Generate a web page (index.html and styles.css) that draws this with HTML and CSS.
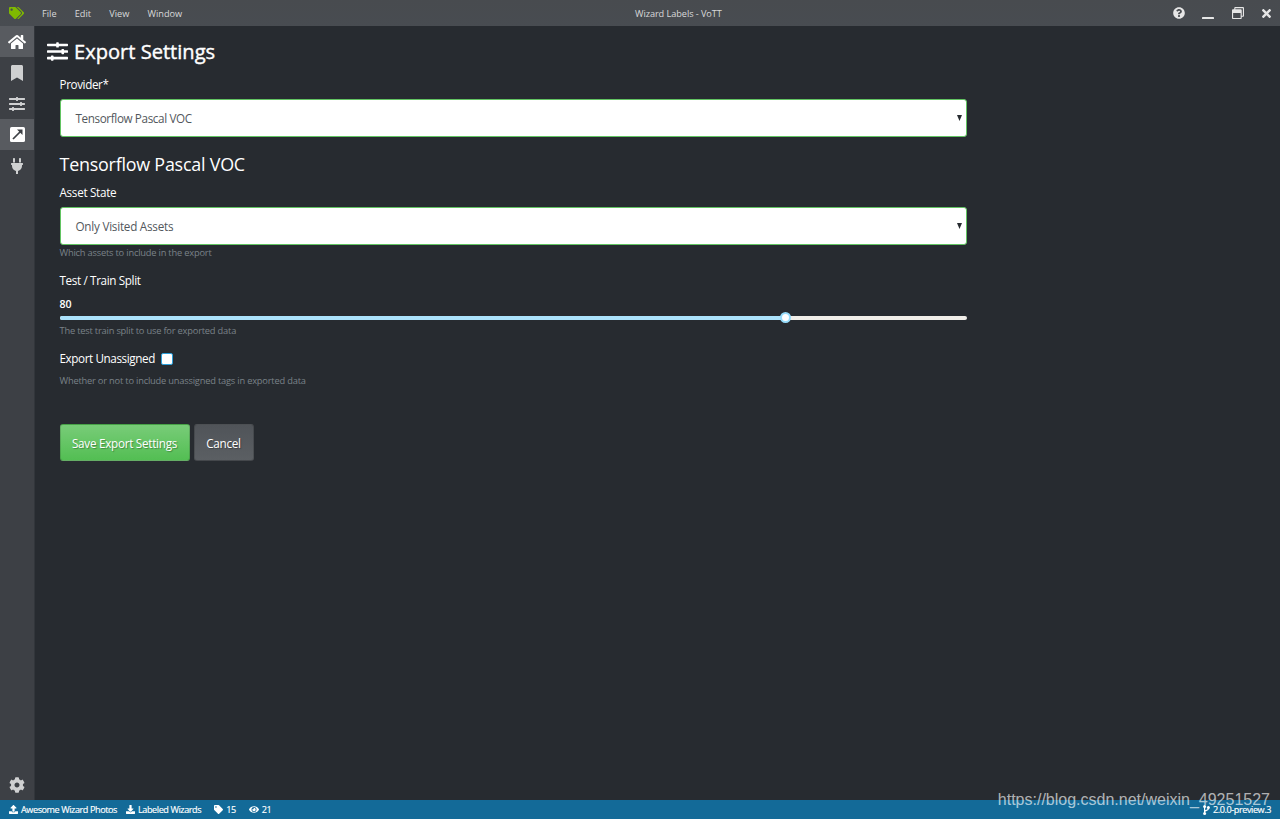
FILE: index.html
```
<!DOCTYPE html>
<html lang="en">

<head>
    <meta charset="UTF-8">
    <meta name="viewport" content="width=device-width, initial-scale=1.0">
    <title>Wizard Labels - VoTT</title>
    <link rel="stylesheet" href="styles.css">
</head>

<body>
    <!-- Title bar -->
    <header class="title-bar">
        <div class="title-left">
            <svg class="logo" viewBox="0 0 640 512"><path d="M497.941 225.941L286.059 14.059A48 48 0 0 0 252.118 0H48C21.49 0 0 21.49 0 48v204.118a48 48 0 0 0 14.059 33.941l211.882 211.882c18.744 18.745 49.136 18.746 67.882 0l204.118-204.118c18.745-18.745 18.745-49.137 0-67.882zM112 160c-26.51 0-48-21.49-48-48s21.49-48 48-48 48 21.49 48 48-21.49 48-48 48zm513.941 133.823L421.823 497.941c-18.745 18.745-49.137 18.745-67.882 0l-.36-.36L527.64 323.522c16.999-16.999 26.362-39.6 26.362-63.64s-9.362-46.641-26.362-63.64L331.397 0h48.721a48 48 0 0 1 33.941 14.059l211.882 211.882c18.745 18.745 18.745 49.137 0 67.882z"/></svg>
            <nav class="menu">
                <span>File</span>
                <span>Edit</span>
                <span>View</span>
                <span>Window</span>
            </nav>
        </div>
        <div class="window-title">Wizard Labels - VoTT</div>
        <div class="window-buttons">
            <svg class="help-icon" viewBox="0 0 512 512"><path d="M504 256c0 136.997-111.043 248-248 248S8 392.997 8 256C8 119.083 119.043 8 256 8s248 111.083 248 248zM262.655 90c-54.497 0-89.255 22.957-116.549 63.758-3.536 5.286-2.353 12.415 2.715 16.258l34.699 26.31c5.205 3.947 12.621 3.008 16.665-2.122 17.864-22.658 30.113-35.797 57.303-35.797 20.429 0 45.698 13.148 45.698 32.958 0 14.976-12.363 22.667-32.534 33.976C247.128 238.528 216 254.941 216 296v4c0 6.627 5.373 12 12 12h56c6.627 0 12-5.373 12-12v-1.333c0-28.462 83.186-29.647 83.186-106.667 0-58.002-60.165-102-116.531-102zM256 338c-25.365 0-46 20.635-46 46 0 25.364 20.635 46 46 46s46-20.636 46-46c0-25.365-20.635-46-46-46z"/></svg>
            <svg class="minimize-icon" viewBox="0 0 12 12"><rect x="0" y="10" width="12" height="2" rx=".6"/></svg>
            <svg class="restore-icon" viewBox="0 0 512 512"><path d="M464 0H144c-26.500 0-48 21.500-48 48v48H48c-26.500 0-48 21.500-48 48v320c0 26.500 21.500 48 48 48h320c26.500 0 48-21.500 48-48v-48h48c26.500 0 48-21.500 48-48V48c0-26.500-21.500-48-48-48zm-96 464H48V256h320v208zm96-96h-48V144c0-26.500-21.500-48-48-48H144V48h320v320z"/></svg>
            <svg class="close-icon" viewBox="0 0 352 512"><path d="M242.720 256l100.070-100.070c12.280-12.280 12.280-32.190 0-44.480l-22.240-22.240c-12.280-12.280-32.190-12.280-44.480 0L176 189.280 75.930 89.210c-12.280-12.280-32.190-12.280-44.480 0L9.210 111.450c-12.280 12.280-12.280 32.190 0 44.480L109.280 256 9.210 356.070c-12.280 12.280-12.280 32.190 0 44.480l22.240 22.240c12.280 12.280 32.200 12.280 44.480 0L176 322.720l100.070 100.070c12.280 12.280 32.200 12.280 44.480 0l22.240-22.240c12.280-12.280 12.280-32.190 0-44.480L242.720 256z"/></svg>
        </div>
    </header>

    <div class="main">
        <!-- Sidebar -->
        <aside class="sidebar">
            <div class="side-item active">
                <svg class="home-icon" viewBox="0 0 576 512"><path d="M280.370 148.260L96 300.110V464a16 16 0 0 0 16 16l112.060-.29a16 16 0 0 0 15.920-16V368a16 16 0 0 1 16-16h64a16 16 0 0 1 16 16v95.640a16 16 0 0 0 16 16.050L464 480a16 16 0 0 0 16-16V300L295.670 148.260a12.190 12.190 0 0 0-15.300 0zM571.600 251.470L488 182.560V44.050a12 12 0 0 0-12-12h-56a12 12 0 0 0-12 12v72.610L318.470 43a48 48 0 0 0-61 0L4.340 251.470a12 12 0 0 0-1.600 16.900l25.500 31A12 12 0 0 0 45.150 301l235.220-193.740a12.190 12.190 0 0 1 15.300 0L530.900 301a12 12 0 0 0 16.900-1.600l25.500-31a12 12 0 0 0-1.700-16.930z"/></svg>
            </div>
            <div class="side-item">
                <svg class="bookmark-icon" viewBox="0 0 384 512"><path d="M0 512V48C0 21.490 21.490 0 48 0h288c26.510 0 48 21.490 48 48v464L192 400 0 512z"/></svg>
            </div>
            <div class="side-item">
                <svg class="side-icon" viewBox="0 0 512 512"><path d="M496 384H160v-16c0-8.800-7.200-16-16-16h-32c-8.800 0-16 7.200-16 16v16H16c-8.800 0-16 7.200-16 16v32c0 8.800 7.200 16 16 16h80v16c0 8.800 7.200 16 16 16h32c8.800 0 16-7.200 16-16v-16h336c8.800 0 16-7.200 16-16v-32c0-8.800-7.200-16-16-16zm0-160h-80v-16c0-8.800-7.200-16-16-16h-32c-8.800 0-16 7.200-16 16v16H16c-8.800 0-16 7.200-16 16v32c0 8.800 7.200 16 16 16h336v16c0 8.800 7.200 16 16 16h32c8.800 0 16-7.200 16-16v-16h80c8.800 0 16-7.200 16-16v-32c0-8.800-7.200-16-16-16zm0-160H288V48c0-8.800-7.200-16-16-16h-32c-8.800 0-16 7.200-16 16v16H16C7.200 64 0 71.200 0 80v32c0 8.800 7.200 16 16 16h208v16c0 8.800 7.200 16 16 16h32c8.800 0 16-7.200 16-16v-16h208c8.800 0 16-7.200 16-16V80c0-8.800-7.200-16-16-16z"/></svg>
            </div>
            <div class="side-item active">
                <svg class="export-icon" viewBox="0 0 15 15">
                    <rect width="15" height="15" rx="1.6"/>
                    <path class="arrow-head" d="M7 2.500h5.500V8z"/>
                    <path class="arrow-line" d="M3 12l7.500-7.500"/>
                </svg>
            </div>
            <div class="side-item">
                <svg class="plug-icon" viewBox="0 0 384 512"><path d="M256 144V32c0-17.673 14.327-32 32-32s32 14.327 32 32v112h-64zm112 16H16c-8.837 0-16 7.163-16 16v32c0 8.837 7.163 16 16 16h16v32c0 77.406 54.969 141.971 128 156.796V512h64v-99.204c73.031-14.825 128-79.390 128-156.796v-32h16c8.837 0 16-7.163 16-16v-32c0-8.837-7.163-16-16-16zm-240-16V32c0-17.673-14.327-32-32-32S64 14.327 64 32v112h64z"/></svg>
            </div>
            <div class="side-item settings">
                <svg class="side-icon" viewBox="0 0 512 512"><path d="M487.400 315.700l-42.600-24.600c4.300-23.200 4.300-47 0-70.200l42.600-24.600c4.900-2.800 7.100-8.600 5.500-14-11.100-35.600-30-67.800-54.700-94.600-3.800-4.100-10-5.100-14.800-2.300L380.800 110c-17.900-15.400-38.500-27.300-60.800-35.100V25.800c0-5.600-3.900-10.500-9.400-11.700-36.700-8.200-74.300-7.800-109.200 0-5.500 1.200-9.400 6.100-9.400 11.700V75c-22.200 7.900-42.800 19.800-60.800 35.100L88.700 85.500c-4.900-2.800-11-1.900-14.800 2.300-24.700 26.700-43.600 58.900-54.700 94.600-1.700 5.400.6 11.200 5.500 14L67.300 221c-4.300 23.200-4.300 47 0 70.200l-42.600 24.600c-4.900 2.800-7.100 8.600-5.500 14 11.100 35.600 30 67.800 54.700 94.600 3.800 4.100 10 5.100 14.800 2.300l42.600-24.600c17.900 15.400 38.500 27.300 60.800 35.100v49.200c0 5.600 3.900 10.500 9.400 11.700 36.700 8.200 74.300 7.800 109.200 0 5.500-1.200 9.400-6.100 9.400-11.700v-49.200c22.200-7.900 42.800-19.800 60.800-35.100l42.600 24.600c4.900 2.800 11 1.900 14.800-2.300 24.700-26.700 43.600-58.900 54.700-94.600 1.500-5.500-.7-11.300-5.600-14.100zM256 336c-44.100 0-80-35.900-80-80s35.900-80 80-80 80 35.900 80 80-35.900 80-80 80z"/></svg>
            </div>
        </aside>

        <!-- Export settings page -->
        <main class="content">
            <h2 class="page-title">
                <svg viewBox="0 0 512 512"><path d="M496 384H160v-16c0-8.800-7.200-16-16-16h-32c-8.800 0-16 7.200-16 16v16H16c-8.800 0-16 7.200-16 16v32c0 8.800 7.200 16 16 16h80v16c0 8.800 7.200 16 16 16h32c8.800 0 16-7.200 16-16v-16h336c8.800 0 16-7.200 16-16v-32c0-8.800-7.200-16-16-16zm0-160h-80v-16c0-8.800-7.200-16-16-16h-32c-8.800 0-16 7.200-16 16v16H16c-8.800 0-16 7.200-16 16v32c0 8.800 7.200 16 16 16h336v16c0 8.800 7.200 16 16 16h32c8.800 0 16-7.200 16-16v-16h80c8.800 0 16-7.200 16-16v-32c0-8.800-7.200-16-16-16zm0-160H288V48c0-8.800-7.200-16-16-16h-32c-8.800 0-16 7.200-16 16v16H16C7.200 64 0 71.200 0 80v32c0 8.800 7.200 16 16 16h208v16c0 8.800 7.200 16 16 16h32c8.800 0 16-7.200 16-16v-16h208c8.800 0 16-7.200 16-16V80c0-8.800-7.200-16-16-16z"/></svg>
                <span>Export Settings</span>
            </h2>
            <form class="settings-form">
                <label class="label provider-label">Provider*</label>
                <div class="select">
                    <span class="provider-value">Tensorflow Pascal VOC</span>
                    <svg class="caret" viewBox="0 0 5 6"><path d="M0 0h5L2.500 6z"/></svg>
                </div>
                <h4 class="section-title">Tensorflow Pascal VOC</h4>
                <label class="label asset-label">Asset State</label>
                <div class="select">
                    <span class="asset-value">Only Visited Assets</span>
                    <svg class="caret" viewBox="0 0 5 6"><path d="M0 0h5L2.500 6z"/></svg>
                </div>
                <small class="hint">Which assets to include in the export</small>
                <label class="label split-label">Test / Train Split</label>
                <div class="split-value">80</div>
                <div class="slider">
                    <div class="slider-track" style="width: 80%"></div>
                    <div class="slider-handle" style="left: 80%"></div>
                </div>
                <small class="hint">The test train split to use for exported data</small>
                <label class="label checkbox-label">Export Unassigned<span class="checkbox"></span></label>
                <small class="hint">Whether or not to include unassigned tags in exported data</small>
                <div class="buttons">
                    <button type="button" class="btn btn-success">Save Export Settings</button>
                    <button type="button" class="btn btn-secondary">Cancel</button>
                </div>
            </form>
        </main>
    </div>

    <!-- Status bar -->
    <footer class="status-bar">
        <div class="status-item">
            <svg viewBox="0 0 512 512"><path d="M296 384h-80c-13.300 0-24-10.700-24-24V192h-87.700c-17.800 0-26.700-21.500-14.100-34.100L242.300 5.700c7.500-7.500 19.800-7.500 27.300 0l152.200 152.200c12.600 12.600 3.700 34.100-14.100 34.100H320v168c0 13.300-10.700 24-24 24zm216-8v112c0 13.300-10.700 24-24 24H24c-13.300 0-24-10.700-24-24V376c0-13.300 10.700-24 24-24h136v8c0 30.900 25.100 56 56 56h80c30.900 0 56-25.100 56-56v-8h136c13.300 0 24 10.700 24 24z"/></svg>
            <span>Awesome Wizard Photos</span>
        </div>
        <div class="status-item target">
            <svg viewBox="0 0 512 512"><path d="M216 0h80c13.300 0 24 10.700 24 24v168h87.700c17.800 0 26.700 21.500 14.100 34.100L269.700 378.300c-7.500 7.500-19.800 7.500-27.300 0L90.100 226.100c-12.600-12.600-3.700-34.100 14.100-34.100H192V24c0-13.300 10.700-24 24-24zm296 376v112c0 13.300-10.700 24-24 24H24c-13.300 0-24-10.700-24-24V376c0-13.300 10.700-24 24-24h146.700l49 49c20.100 20.100 52.500 20.100 72.600 0l49-49H488c13.300 0 24 10.700 24 24z"/></svg>
            <span>Labeled Wizards</span>
        </div>
        <div class="status-item tagged">
            <svg viewBox="0 0 512 512"><path d="M0 252.118V48C0 21.490 21.490 0 48 0h204.118a48 48 0 0 1 33.941 14.059l211.882 211.882c18.745 18.745 18.745 49.137 0 67.882L293.823 497.941c-18.745 18.745-49.137 18.745-67.882 0L14.059 286.059A48 48 0 0 1 0 252.118zM112 64c-26.510 0-48 21.490-48 48s21.490 48 48 48 48-21.490 48-48-21.490-48-48-48z"/></svg>
            <span>15</span>
        </div>
        <div class="status-item visited">
            <svg viewBox="0 0 576 512"><path d="M572.520 241.400C518.290 135.590 410.930 64 288 64S57.680 135.640 3.480 241.410a32.350 32.350 0 0 0 0 29.190C57.710 376.410 165.070 448 288 448s230.320-71.640 284.520-177.410a32.350 32.350 0 0 0 0-29.190zM288 400a144 144 0 1 1 144-144 143.930 143.930 0 0 1-144 144zm0-240a95.310 95.310 0 0 0-25.310 3.790 47.850 47.850 0 0 1-66.900 66.900A95.780 95.780 0 1 0 288 160z"/></svg>
            <span>21</span>
        </div>
        <div class="status-item version">
            <svg viewBox="0 0 7 10">
                <circle cx="1.600" cy="1.600" r="1.500"/>
                <circle cx="1.600" cy="8.400" r="1.500"/>
                <circle cx="5.400" cy="2.600" r="1.500"/>
                <path class="branch-line" d="M1.600 1.600v6.800M5.400 2.600v1.200c0 2.200-3.800 1-3.800 3.200"/>
            </svg>
            <span>2.0.0-preview.3</span>
        </div>
    </footer>

    <div class="watermark">https://blog.csdn.net/weixin_49251527</div>
</body>

</html>
```

FILE: styles.css
```
* {
    box-sizing: border-box;
}

body {
    margin: 0;
    height: 819px;
    display: flex;
    flex-direction: column;
    overflow: hidden;
    background: #272b30;
    color: #fff;
    font-family: "Open Sans", "Noto Sans", sans-serif;
    font-size: 11.7px;
    white-space: nowrap;
}

svg {
    display: block;
    flex: none;
    fill: currentColor;
}

/* Title bar */
.title-bar {
    display: grid;
    grid-template-columns: 635px auto 1fr;
    align-items: center;
    height: 26px;
    background: linear-gradient(#484b4f, #484c51);
    color: #d8d9da;
    font-size: 9.2px;
}

.title-left {
    display: flex;
    align-items: center;
    gap: 18px;
    padding-left: 9px;
}

.logo {
    width: 15px;
    height: 12px;
    color: #7fba00;
}

.menu {
    display: flex;
    gap: 18.2px;
}

.window-title {
    letter-spacing: -0.07px;
}

.window-buttons {
    display: flex;
    justify-content: flex-end;
    align-items: center;
    padding-right: 9px;
    color: #e6e6e6;
}

.help-icon {
    width: 12px;
    height: 12px;
    margin-right: 17px;
}

.minimize-icon {
    width: 12px;
    height: 12px;
    margin-right: 18px;
}

.restore-icon {
    width: 12px;
    height: 12px;
    margin-right: 18px;
}

.close-icon {
    width: 9px;
    height: 13px;
}

.main {
    flex: 1;
    display: flex;
    min-height: 0;
}

/* Sidebar */
.sidebar {
    display: flex;
    flex-direction: column;
    width: 35px;
    background: #3d4045;
    border-right: 1px solid #32363b;
    color: #cfd0d1;
}

.side-item {
    display: flex;
    align-items: center;
    justify-content: center;
    height: 31px;
}

.side-item.active {
    background: #585b60;
    color: #fff;
}

.side-item.settings {
    margin-top: auto;
}

.side-icon {
    width: 16px;
    height: 16px;
}

.home-icon {
    width: 18px;
    height: 16px;
}

.bookmark-icon {
    width: 12px;
    height: 16px;
}

.export-icon {
    width: 15px;
    height: 15px;
}

.arrow-head {
    fill: #3d4045;
}

.arrow-line {
    fill: none;
    stroke: #3d4045;
    stroke-width: 1.7;
}

.plug-icon {
    width: 12px;
    height: 16px;
}

/* Page content */
.content {
    flex: 1;
    padding: 12px;
}

.page-title {
    display: flex;
    align-items: center;
    gap: 6px;
    height: 27px;
    margin: 0;
    font-size: 20.1px;
    font-weight: 500;
    -webkit-text-stroke: 0.4px #fff;
}

.page-title svg {
    width: 21px;
    height: 21px;
}

.settings-form {
    width: 920px;
    padding: 10px 0 0 12.5px;
}

.label {
    display: block;
    height: 20px;
    letter-spacing: -0.4px;
    line-height: 18px;
}

.provider-label {
    margin-bottom: 4px;
}

.select {
    display: flex;
    align-items: center;
    justify-content: space-between;
    height: 38px;
    padding: 0 4px 0 15px;
    background: #fff;
    border: 1px solid #62c462;
    border-radius: 3px;
    color: #52575c;
}

.provider-value {
    letter-spacing: -0.38px;
}

.asset-value {
    letter-spacing: -0.24px;
}

.caret {
    width: 5px;
    height: 6px;
    margin-bottom: 1px;
    color: #272b30;
}

.section-title {
    height: 26px;
    margin: 14px 0 6px;
    font-size: 17.9px;
    font-weight: 400;
    letter-spacing: -0.22px;
    line-height: 26px;
}

.asset-label {
    margin-bottom: 4px;
    letter-spacing: -0.3px;
}

.hint {
    display: block;
    height: 15px;
    color: #7a8288;
    font-size: 9.3px;
    letter-spacing: -0.2px;
    line-height: 15px;
}

.split-label {
    margin-top: 11px;
    letter-spacing: -0.36px;
}

.split-value {
    height: 20px;
    margin: 3px 0 1.5px;
    font-size: 10.6px;
    font-weight: 600;
    line-height: 20px;
}

.slider {
    position: relative;
    height: 4px;
    margin-bottom: 3.5px;
    background: #f0eee9;
    border-radius: 2px;
}

.slider-track {
    height: 4px;
    background: #abe2fb;
    border-radius: 2px;
}

/* Handle sits over the track */
.slider-handle {
    position: absolute;
    top: -3.5px;
    width: 11px;
    height: 11px;
    margin-left: -5.5px;
    background: #fff;
    border: 2px solid #96dbfa;
    border-radius: 50%;
}

.checkbox-label {
    display: flex;
    align-items: flex-start;
    margin: 11px 0 4px;
}

.checkbox {
    width: 12px;
    height: 12px;
    margin: 4px 0 0 6px;
    background: #fff;
    border: 1px solid #2b9fd9;
    border-radius: 2px;
}

.buttons {
    display: flex;
    gap: 4px;
    margin-top: 36px;
}

.btn {
    height: 37px;
    padding: 1px 0 0;
    border: 1px solid rgba(0, 0, 0, 0.15);
    border-radius: 3px;
    color: #fff;
    font-family: inherit;
    font-size: 11.7px;
    letter-spacing: -0.27px;
    text-shadow: 1px 1px 1px rgba(0, 0, 0, 0.3);
}

.btn-success {
    width: 130px;
    background: linear-gradient(#78cc78, #62c462 60%, #53be53);
}

.btn-secondary {
    width: 60px;
    background: linear-gradient(#505459, #5b5f63);
}

/* Status bar */
.status-bar {
    display: flex;
    align-items: center;
    height: 19px;
    padding: 0 9px;
    background: #136a98;
    font-size: 9.1px;
    letter-spacing: -0.42px;
    -webkit-text-stroke: 0.15px #fff;
}

.status-item {
    display: flex;
    align-items: center;
    gap: 3px;
}

.status-item svg {
    width: 9px;
    height: 9px;
}

.target {
    margin-left: 9px;
}

.tagged {
    margin-left: 13px;
}

.visited {
    margin-left: 13px;
}

.status-item.visited svg {
    width: 10px;
}

.version {
    margin-left: auto;
}

.status-item.version svg {
    width: 7px;
    height: 10px;
}

.branch-line {
    fill: none;
    stroke: #fff;
    stroke-width: 1.2;
}

.watermark {
    position: absolute;
    right: 10px;
    bottom: 10px;
    color: rgba(255, 255, 255, 0.65);
    font-family: "Liberation Sans", Arial, sans-serif;
    font-size: 16px;
    line-height: 18px;
}
```
